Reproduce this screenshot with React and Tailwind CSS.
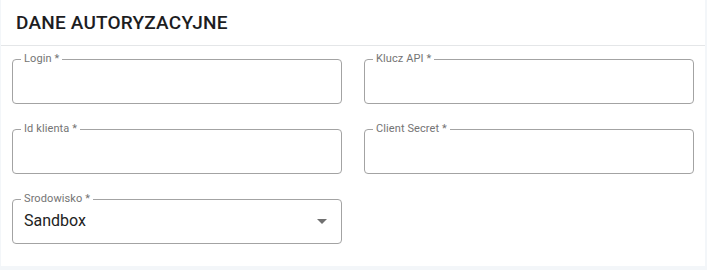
import React from 'react';

const Field = ({ label, value, select }) => (
  <fieldset className="h-[51px] rounded-[4px] border border-[#a3a3a3] px-[11px] m-0 min-w-0 flex items-center">
    <legend className="ml-[-3px] px-[3px] text-[11px] leading-[12px] text-[#747474] tracking-[0.1px]">{label}</legend>
    <div className="flex-1 flex items-center justify-between h-[44px] -mt-[7px]">
      <span className="text-[16px] text-[#222] leading-none">{value}</span>
      {select && (
        <svg width="24" height="24" viewBox="0 0 24 24" className="mr-[-4px] text-[#707070]">
          <path d="M7 10l5 5 5-5z" fill="currentColor" />
        </svg>
      )}
    </div>
  </fieldset>
);

const App = () => {
  return (
    <div className="w-[707px] h-[270px] bg-[#f3f6f9] pl-px" style={{ fontFamily: 'Roboto, "Noto Sans", sans-serif' }}>
      <div className="w-[704px] h-[266px] bg-white">
        <div className="h-[46px] flex items-center pl-[15px] border-b border-[#e4e6e8]">
          <h2 className="text-[19px] font-medium text-[#1d1d1f] tracking-[0.2px] pt-[1px]">DANE AUTORYZACYJNE</h2>
        </div>
        <div className="grid grid-cols-2 gap-x-[22px] gap-y-[19px] pl-[11px] pr-[11px] pt-[7px]">
          <Field label="Login *" />
          <Field label="Klucz API *" />
          <Field label="Id klienta *" />
          <Field label="Client Secret *" />
          <Field label="Srodowisko *" value="Sandbox" select />
        </div>
      </div>
    </div>
  );
};

export default App;
